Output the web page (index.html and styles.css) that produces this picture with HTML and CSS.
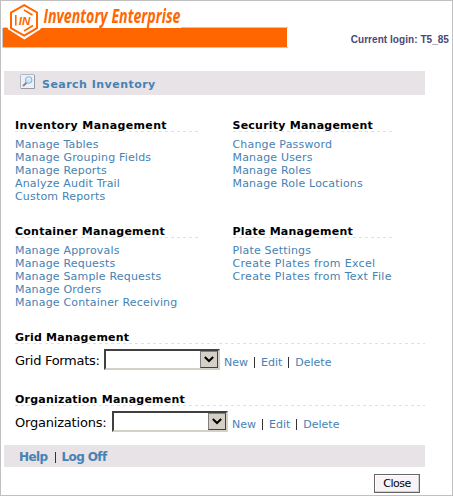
FILE: index.html
```html
<!DOCTYPE html>
<html lang="en">
<head>
<meta charset="utf-8">
<title>Inventory Enterprise</title>
<link rel="stylesheet" href="styles.css">
</head>
<body>
<div class="page">
  <header class="header">
    <svg class="banner" width="290" height="50" viewBox="0 0 290 50">
      <path d="M3.500 27.500H288M2.500 28V47.500H288" fill="none" stroke="#c9c9c9"/>
      <path d="M41 26H181V28H41z" fill="#fff"/>
      <rect x="3" y="28" width="284" height="19" fill="#ff6600"/>
      <path d="M7 27H42L40 29.500L24.300 39.500L8.500 29.500z" fill="#fff"/>
      <path d="M24.200 5.200L37 12.500V28.200L24.200 35.600L11 28.200V12.500z" fill="#fff" stroke="#ff6600" stroke-width="2"/>
      <path d="M15.800 15V25.500M24 10L32.500 15M24 31L33 25.500" fill="none" stroke="#ff6600" stroke-width="1.600"/>
      <text class="mark" x="18.800" y="24.500" textLength="11.500" lengthAdjust="spacingAndGlyphs">IN</text>
      <text class="brand" x="43.500" y="22.500" textLength="137" lengthAdjust="spacingAndGlyphs">Inventory Enterprise</text>
    </svg>
    <div class="login">Current login: T5_85</div>
  </header>
  <nav class="bar search">
    <svg width="16" height="16" viewBox="0 0 16 16">
      <rect x=".5" y=".5" width="14" height="14" rx="1" fill="#edf0f6" stroke="#b2b5c2"/>
      <path d="M1 14.500H14.500V1" fill="none" stroke="#9699a8"/>
      <path d="M3 12L6.500 8.800" stroke="#9a8078" stroke-width="2"/>
      <circle cx="8.700" cy="6" r="3.300" fill="#c5e8fa" stroke="#8fabcf"/>
      <path d="M7 5.500Q8 3.500 10 4.500" fill="none" stroke="#fff"/>
    </svg>
    <a>Search Inventory</a>
  </nav>
  <main class="content">
    <div class="groups">
      <section>
        <h2 class="wide">Inventory Management</h2>
        <ul><li>Manage Tables</li><li>Manage Grouping Fields</li><li>Manage Reports</li><li>Analyze Audit Trail</li><li>Custom Reports</li></ul>
      </section>
      <section>
        <h2>Security Management</h2>
        <ul><li>Change Password</li><li>Manage Users</li><li>Manage Roles</li><li>Manage Role Locations</li></ul>
      </section>
      <section>
        <h2>Container Management</h2>
        <ul><li>Manage Approvals</li><li>Manage Requests</li><li>Manage Sample Requests</li><li>Manage Orders</li><li>Manage Container Receiving</li></ul>
      </section>
      <section>
        <h2>Plate Management</h2>
        <ul><li>Plate Settings</li><li class="wide">Create Plates from Excel</li><li class="wide">Create Plates from Text File</li></ul>
      </section>
    </div>
    <section class="manage">
      <h2>Grid Management</h2>
      <div class="row">
        <span class="label grid-label">Grid Formats:</span>
        <span class="select"><span class="drop"><svg width="10" height="7" viewBox="0 0 10 7"><path d="M.8 1L5 5L9.200 1" fill="none" stroke="#000" stroke-width="2"/></svg></span></span>
        <span class="actions"><a>New</a><i></i><a>Edit</a><i></i><a>Delete</a></span>
      </div>
    </section>
    <section class="manage">
      <h2>Organization Management</h2>
      <div class="row">
        <span class="label org-label">Organizations:</span>
        <span class="select"><span class="drop"><svg width="10" height="7" viewBox="0 0 10 7"><path d="M.8 1L5 5L9.200 1" fill="none" stroke="#000" stroke-width="2"/></svg></span></span>
        <span class="actions"><a>New</a><i></i><a>Edit</a><i></i><a>Delete</a></span>
      </div>
    </section>
  </main>
  <footer class="bar foot"><a>Help</a><i></i><a>Log Off</a></footer>
  <button class="close">Close</button>
</div>
</body>
</html>
```
FILE: styles.css
```css
* { box-sizing: border-box; }
body { margin: 0; background: #fff; font: 11px/13px "DejaVu Sans", sans-serif; color: #000; }
.page { width: 453px; height: 496px; border: 1px solid #c0c0c0; overflow: hidden; display: flex; flex-direction: column; }
.page > * { flex: none; }
.header { height: 70px; display: flex; justify-content: space-between; }
.banner { margin: -1px 0 0 -1px; flex: none; }
.brand { font: italic bold 19.5px "Open Sans", sans-serif; fill: #ff6600; }
.mark { font: italic bold 10px "Liberation Sans", sans-serif; fill: #ff6600; }
.login { font: bold 10px/13px "Liberation Sans", sans-serif; letter-spacing: .05px; color: #4a4778; margin: 32px 3px 0 0; white-space: nowrap; }
.bar { width: 421px; margin-left: 3px; background: #e7e3e7; display: flex; align-items: center; font-weight: bold; color: #4682b4; }
.search { height: 24px; padding: 2px 0 0 16px; gap: 6px; letter-spacing: .47px; }
.search svg { margin-top: -4px; }
.foot { height: 22px; padding: 2px 0 0 15px; font-size: 12px; letter-spacing: -.6px; }
.foot i { margin: 0 6px 0 7px; }
i { width: 1px; height: 11px; background: #333; }
.content { padding: 25px 0 0 14px; }
.groups { display: grid; grid-template-columns: 185px 161px; column-gap: 32.5px; grid-template-rows: 106px 106px; }
h2 { margin: 0; height: 12px; font-size: 11px; line-height: 12px; font-weight: bold; letter-spacing: .23px; white-space: nowrap; background: repeating-linear-gradient(90deg, #e0e0e0 0 3px, #fff 3px 6px) 0 100% / 100% 1px no-repeat; }
h2.wide { letter-spacing: .37px; }
ul { list-style: none; margin: 6px 0 0; padding: 0; color: #4682b4; white-space: nowrap; letter-spacing: .18px; }
li.wide { letter-spacing: .33px; }
.manage { width: 410px; height: 62px; }
.manage:last-child { height: 51px; }
.row { display: flex; margin-top: 5px; height: 21px; align-items: center; }
.label { font-size: 13px; flex: none; white-space: nowrap; letter-spacing: -.2px; padding-top: 2px; }
.grid-label { width: 89px; letter-spacing: -.3px; }
.org-label { width: 97px; }
.select { width: 116px; height: 21px; flex: none; border: 2px solid #404040; border-right-color: #d4d0c8; border-bottom-color: #d4d0c8; display: flex; justify-content: flex-end; }
.drop { width: 18px; height: 17px; background: #d4d0c8; border: 1px solid #808080; border-right-color: #404040; border-bottom-color: #404040; display: flex; align-items: center; justify-content: center; }
.actions { display: flex; align-items: center; margin: 5px 0 0 4px; color: #4682b4; }
.actions i { margin: 0 6px; }
.close { width: 46px; height: 19px; margin: 7px 0 0 373px; padding: 0; font: 11px/14px "DejaVu Sans", sans-serif; letter-spacing: -.5px; color: #000; background: #f7f3f7; border: 1px solid #666; box-shadow: inset -1px -1px #d0d0c8, inset 1px 1px #fff; }
```
